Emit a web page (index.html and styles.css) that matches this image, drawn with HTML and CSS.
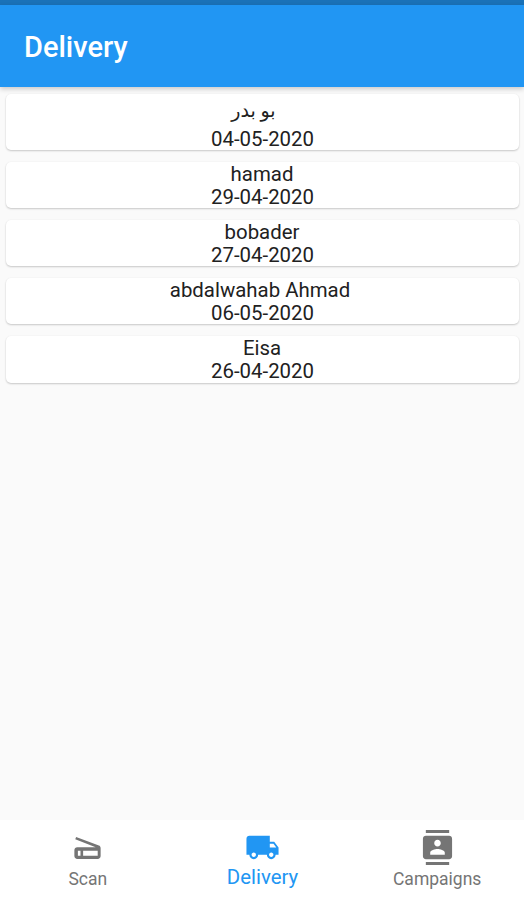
FILE: index.html
```
<!DOCTYPE html>
<html lang="en">
<head>
<meta charset="utf-8">
<title>Delivery</title>
<link rel="stylesheet" href="styles.css">
</head>
<body>
<div class="status-bar"></div>
<header class="app-bar"><h1>Delivery</h1></header>
<main class="list">
  <article class="card"><div class="name arabic" lang="ar" dir="rtl">بو بدر</div><div>04-05-2020</div></article>
  <article class="card"><div class="name">hamad</div><div>29-04-2020</div></article>
  <article class="card"><div class="name">bobader</div><div>27-04-2020</div></article>
  <article class="card"><div class="name trailing">abdalwahab Ahmad</div><div>06-05-2020</div></article>
  <article class="card"><div class="name">Eisa</div><div>26-04-2020</div></article>
</main>
<nav class="tabs">
  <div class="tab">
    <svg viewBox="0 0 24 24"><path fill-rule="evenodd" d="M19.8 10.700L4.200 4.800l-.6 1.600L17.600 11.800H5c-1.100 0-2 .9-2 2v4c0 1.100.9 2 2 2h14c1.100 0 2-.9 2-2v-5.300c0-.8-.5-1.600-1.200-1.800zM7.200 17.600H5.400v-3.400h1.800v3.400zm11.800 0H9v-3.400h10v3.400z"/></svg>
    <span>Scan</span>
  </div>
  <div class="tab active">
    <svg viewBox="0 0 24 24"><path d="M20 8h-3V4H3c-1.1 0-2 .9-2 2v11h2c0 1.66 1.34 3 3 3s3-1.34 3-3h6c0 1.66 1.34 3 3 3s3-1.34 3-3h2v-5l-3-4zM6 18.5c-.83 0-1.5-.67-1.5-1.5s.67-1.5 1.5-1.5 1.5.67 1.5 1.5-.67 1.5-1.5 1.5zm13.5-9l1.96 2.5H17V9.5h2.5zm-1.5 9c-.83 0-1.5-.67-1.5-1.5s.67-1.5 1.5-1.5 1.5.67 1.5 1.5-.67 1.5-1.5 1.5z"/></svg>
    <span>Delivery</span>
  </div>
  <div class="tab">
    <svg viewBox="0 0 24 24"><path d="M20 0H4v2h16V0zM4 24h16v-2H4v2zM20 4H4c-1.1 0-2 .9-2 2v12c0 1.1.9 2 2 2h16c1.1 0 2-.9 2-2V6c0-1.1-.9-2-2-2zm-8 2.75c1.24 0 2.25 1.01 2.25 2.25s-1.01 2.25-2.25 2.25S9.75 10.24 9.75 9 10.76 6.75 12 6.75zM17 17H7v-1.5c0-1.67 3.33-2.5 5-2.5s5 .83 5 2.5V17z"/></svg>
    <span>Campaigns</span>
  </div>
</nav>
</body>
</html>
```
FILE: styles.css
```
* { box-sizing: border-box; }
body {
  margin: 0;
  height: 900px;
  display: flex;
  flex-direction: column;
  overflow: hidden;
  background: #fafafa;
  color: #212121;
  font-family: Roboto, "DejaVu Sans", sans-serif;
}
.status-bar { height: 5px; background: #1a72b8; flex: none; }
.app-bar {
  height: 82px;
  flex: none;
  display: flex;
  align-items: center;
  padding: 2px 24px 0;
  background: #2196f3;
  box-shadow: 0 2px 5px rgba(0, 0, 0, .2);
  z-index: 1;
}
.app-bar h1 {
  margin: 0;
  color: #fff;
  font-size: 29px;
  font-weight: 500;
  line-height: 34px;
}
.list {
  flex: 1;
  padding: 7px 5px 0 6px;
  display: flex;
  flex-direction: column;
  gap: 12px;
}
.card {
  height: 46.1px;
  padding-top: .6px;
  background: #fff;
  border-radius: 5px;
  box-shadow: 0 1px 2px rgba(0, 0, 0, .2), 0 0 2px rgba(0, 0, 0, .04);
  text-align: center;
  font-size: 20.4px;
  line-height: 23px;
}
.card:first-child { height: 56.2px; }
.card .name { height: 23.4px; padding-right: 1px; }
.card .trailing { padding-right: 5px; }
.card .arabic {
  height: 33px;
  padding-right: 18px;
  line-height: 31px;
  font-size: 19px;
}
.tabs {
  height: 80px;
  flex: none;
  display: flex;
  background: #fff;
}
.tab {
  flex: 1;
  display: flex;
  flex-direction: column;
  align-items: center;
  padding: 10px 0 0 1px;
  color: #757575;
  font-size: 17.5px;
  line-height: 24px;
}
.tab svg { width: 35px; height: 35px; fill: currentColor; }
.tab span { margin-top: 2px; }
.tab.active { color: #2196f3; font-size: 20.4px; }
.tab.active span { margin-top: 0; }
```
